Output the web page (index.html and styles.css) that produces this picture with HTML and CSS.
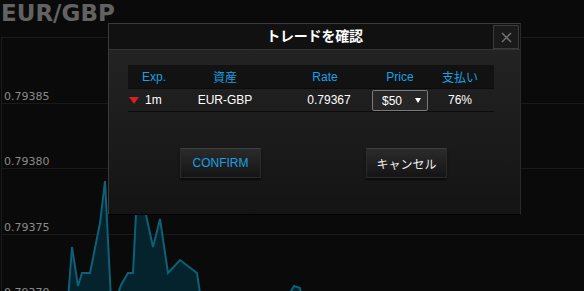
FILE: index.html
```html
<!DOCTYPE html>
<html lang="ja">
<head>
<meta charset="utf-8">
<title>トレードを確認</title>
<link rel="stylesheet" href="styles.css">
</head>
<body>
<div class="page">
  <div class="symbol">EUR/GBP</div>
  <div class="chart">
    <div class="grid-row"><span class="tick">0.79385</span></div>
    <div class="grid-row"><span class="tick">0.79380</span></div>
    <div class="grid-row"><span class="tick">0.79375</span></div>
    <div class="grid-row"><span class="tick">0.79370</span></div>
    <svg class="plot" width="582" height="262" viewBox="2 38 582 262" xmlns="http://www.w3.org/2000/svg">
      <path class="area" d="M68,300 L72,247 L78,286 L82,273 L90,273 L100,223 L105,181 L111,300 Z"/>
      <path class="area" d="M116,300 L121,285 L128,273 L133,273 L136,214 L140,150 L145,150 L146,215 L153,247 L160,219 L168,273 L180,260 L197,273 L201,300 Z"/>
      <path class="area" d="M286,300 L294,286 L300,288 L302,300 Z"/>
    </svg>
  </div>

  <div class="modal">
    <div class="modal-head">
      <span></span>
      <div class="modal-title">トレードを確認</div>
      <button class="close" type="button" aria-label="close">
        <svg width="11" height="11" viewBox="0 0 11 11"><path d="M1,1 L10,10 M10,1 L1,10" stroke="#767676" stroke-width="1.4" fill="none"/></svg>
      </button>
    </div>
    <div class="modal-body">
      <div class="trade">
        <div class="row head">
          <div class="c1">Exp.</div>
          <div class="c2">資産</div>
          <div class="c3 rate-h">Rate</div>
          <div class="c4">Price</div>
          <div class="c5">支払い</div>
        </div>
        <div class="row data">
          <div class="c1 exp"><span class="down"></span><span>1m</span></div>
          <div class="c2">EUR-GBP</div>
          <div class="c3 rate-d">0.79367</div>
          <div class="c4"><div class="select"><span>$50</span><span class="caret"></span></div></div>
          <div class="c5">76%</div>
        </div>
      </div>
      <div class="actions">
        <button class="btn confirm" type="button">CONFIRM</button>
        <button class="btn cancel" type="button">キャンセル</button>
      </div>
    </div>
  </div>
</div>
</body>
</html>
```

FILE: styles.css
```css
html, body {
  margin: 0;
  padding: 0;
  background: #0a0a0a;
  overflow: hidden;
}
body {
  width: 584px;
  height: 291px;
  font-family: "Liberation Sans", "Noto Sans CJK JP", sans-serif;
  font-size: 12px;
  color: #fff;
}
.page {
  position: relative;
  width: 584px;
  height: 291px;
  overflow: hidden;
}
.symbol {
  height: 37px;
  line-height: 27px;
  padding-left: 1px;
  font-family: "DejaVu Sans", sans-serif;
  font-weight: bold;
  font-size: 23px;
  color: #626262;
  box-sizing: border-box;
}
.chart {
  position: relative;
  margin-left: 1px;
  border-top: 1px solid #1b1b1b;
  border-left: 1px solid #1b1b1b;
}
.grid-row {
  box-sizing: border-box;
  height: 66px;
  border-bottom: 1px solid #1a1a1a;
  display: flex;
  flex-direction: column;
  justify-content: flex-end;
  padding-left: 2px;
}
.grid-row:nth-child(even) {
  height: 65px;
}
.tick {
  font-family: "DejaVu Sans", sans-serif;
  font-size: 11px;
  line-height: 12px;
  color: #8a8a8a;
}
.plot {
  position: absolute;
  left: 0;
  top: 0;
}
.area {
  fill: #04232c;
  stroke: #0e6076;
  stroke-width: 2;
  stroke-linejoin: miter;
}

/* modal */
.modal {
  position: absolute;
  left: 108px;
  top: 23px;
  width: 413px;
  height: 192px;
  box-sizing: border-box;
  border: 1px solid #3a3a3a;
  border-right-color: #2a2a2a;
  border-bottom-color: #000;
  background: #111;
  display: flex;
  flex-direction: column;
}
.modal-head {
  height: 25px;
  border-bottom: 1px solid #333;
  background: #111;
  display: grid;
  grid-template-columns: 1fr auto 1fr;
  align-items: center;
}
.modal-title {
  font-weight: bold;
  font-size: 14px;
  line-height: 25px;
  color: #fff;
  letter-spacing: -0.2px;
}
.close {
  justify-self: end;
  align-self: start;
  margin: 1px 1px 0 0;
  width: 26px;
  height: 24px;
  padding: 0;
  box-sizing: border-box;
  border: 1px solid #3c3c3c;
  background: #1a1a1a;
  display: flex;
  align-items: center;
  justify-content: center;
}
.modal-body {
  flex: 1;
  padding: 15px 0 0 19px;
  background: linear-gradient(#232323, #141414);
}
.trade {
  width: 366px;
}
.row {
  display: flex;
  align-items: center;
  border-bottom: 1px solid #0c0c0c;
}
.row.head {
  height: 23px;
  background: #121212;
  color: #19a0e3;
}
.row.data {
  height: 22px;
  color: #fff;
}
.row > div {
  box-sizing: border-box;
  text-align: center;
}
.c1 { width: 52px; }
.c2 { width: 90px; }
.c3 { width: 100px; }
.c4 { width: 60px; display: flex; justify-content: center; }
.c5 { width: 64px; padding-right: 4px; }
.rate-h { padding-left: 10px; }
.rate-d { padding-left: 18px; }
.exp {
  display: flex;
  align-items: center;
  padding-left: 1px;
}
.down {
  width: 0;
  height: 0;
  border-left: 5.5px solid transparent;
  border-right: 5.5px solid transparent;
  border-top: 7px solid #d81e1e;
  margin-right: 6px;
}
.select {
  box-sizing: border-box;
  width: 56px;
  height: 21px;
  margin-top: 1px;
  border: 1px solid #7a7a7a;
  border-radius: 2px;
  background: #262626;
  display: flex;
  align-items: center;
  justify-content: space-between;
  padding: 0 6px 0 9px;
  color: #fff;
}
.caret {
  width: 0;
  height: 0;
  border-left: 3px solid transparent;
  border-right: 3px solid transparent;
  border-top: 5px solid #fff;
}
.actions {
  display: flex;
  gap: 105px;
  margin-top: 36px;
  padding-left: 52px;
}
.btn {
  width: 81px;
  height: 30px;
  box-sizing: border-box;
  padding: 0;
  border: 1px solid #2c2c2c;
  border-top-color: #3e3e3e;
  background: linear-gradient(#2b2b2b, #141414);
  box-shadow: 0 2px 2px rgba(0, 0, 0, 0.6);
  font-family: "Liberation Sans", "Noto Sans CJK JP", sans-serif;
  font-size: 12px;
}
.confirm {
  color: #19a0e3;
}
.cancel {
  color: #eee;
}
```
